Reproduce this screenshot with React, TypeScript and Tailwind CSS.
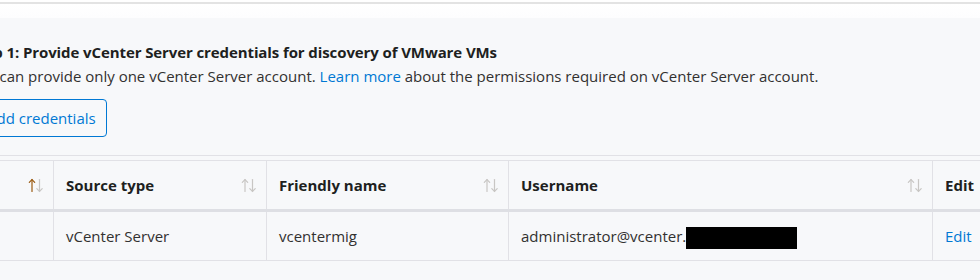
function SortIcon({ active = false }: { active?: boolean }) {
  return (
    <svg width="16" height="15" viewBox="0 0 16 15" fill="none" strokeWidth="1.2" strokeLinecap="round">
      <g stroke={active ? "#9a5a10" : "#c8c6c4"}>
        <path d="M4 1.5V13.5" />
        <path d="M1.3 4.3L4 1.5L6.7 4.3" />
      </g>
      <g stroke="#c8c6c4">
        <path d="M11.5 1.5V13.5" />
        <path d="M8.8 10.7L11.5 13.5L14.2 10.7" />
      </g>
    </svg>
  );
}

const headers = [
  { label: "", active: true },
  { label: "Source type" },
  { label: "Friendly name" },
  { label: "Username" },
];

export default function App() {
  return (
    <div className="w-[980px] h-[280px] overflow-hidden bg-white text-[#323130] font-['Open_Sans',sans-serif]">
      <div className="h-[2px] bg-white" />
      <div className="h-[2px] bg-[#e3e3e3]" />
      <div className="h-[14px] bg-gradient-to-b from-white to-[#fdfdfe]" />

      <div className="bg-[#f7f8fa] h-[262px]">
        <div className="pt-[24px] -ml-[36px]">
          <h2 className="text-[15px] font-bold leading-[20px] text-[#201f1e] tracking-[-0.1px] ml-[6px]">
            Step 1: Provide vCenter Server credentials for discovery of VMware VMs
          </h2>
          <p className="text-[15px] leading-[22px] mt-[3px] ml-[5px]">
            You can provide only one vCenter Server account.{" "}
            <a className="text-[#0078d4]">Learn more</a> about the permissions required on vCenter Server account.
          </p>
          <button className="mt-[12px] ml-[8px] h-[38px] pl-[14px] pr-[10px] border border-[#0078d4] rounded-[4px] text-[15px] text-[#0078d4]">
            Add credentials
          </button>
        </div>

        <div className="mt-[18px] h-px bg-[#e1e1e6]" />

        <div className="mt-[4px] border-t border-[#e1e1e6]">
          <div className="grid grid-cols-[53px_213px_242px_424px_1fr] h-[51px] border-b-[3px] border-[#dedfe4]">
            {headers.map((h, i) => (
              <div
                key={i}
                className={`flex items-center justify-between pl-[12px] pr-[9px] ${i > 0 ? "border-l border-[#e1e1e6]" : ""}`}
              >
                <span className="text-[15px] font-bold text-[#201f1e]">{h.label}</span>
                <SortIcon active={h.active} />
              </div>
            ))}
            <div className="flex items-center pl-[12px] border-l border-[#e1e1e6]">
              <span className="text-[15px] font-bold text-[#201f1e]">Edit</span>
            </div>
          </div>
          <div className="grid grid-cols-[53px_213px_242px_424px_1fr] h-[49px] border-b border-[#e1e1e6] text-[15px]">
            <div />
            <div className="flex items-center pl-[12px] border-l border-[#e1e1e6]">vCenter Server</div>
            <div className="flex items-center pl-[12px] border-l border-[#e1e1e6]">vcentermig</div>
            <div className="flex items-center pl-[12px] border-l border-[#e1e1e6]">
              administrator@vcenter.
              <span className="inline-block w-[111px] h-[22px] bg-black mt-[4px]" />
            </div>
            <div className="flex items-center pl-[12px] border-l border-[#e1e1e6]">
              <a className="text-[#0078d4]">Edit</a>
            </div>
          </div>
        </div>
      </div>
    </div>
  );
}
